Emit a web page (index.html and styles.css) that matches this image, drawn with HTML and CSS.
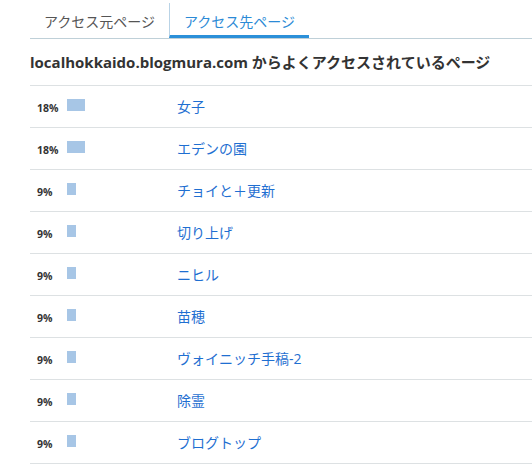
FILE: index.html
```html
<!DOCTYPE html>
<html lang="ja">
<head>
<meta charset="utf-8">
<link rel="stylesheet" href="styles.css">
</head>
<body>
<div class="wrap">
  <div class="tabs">
    <div class="tab">アクセス元ページ</div>
    <div class="tab active">アクセス先ページ</div>
  </div>
  <h2 class="title">localhokkaido.blogmura.com からよくアクセスされているページ</h2>
  <div class="list">
    <div class="row"><div class="rate"><span class="pct">18%</span><span class="bar" style="width:18px"></span></div><a class="link">女子</a></div>
    <div class="row"><div class="rate"><span class="pct">18%</span><span class="bar" style="width:18px"></span></div><a class="link">エデンの園</a></div>
    <div class="row"><div class="rate"><span class="pct">9%</span><span class="bar" style="width:9px"></span></div><a class="link">チョイと＋更新</a></div>
    <div class="row"><div class="rate"><span class="pct">9%</span><span class="bar" style="width:9px"></span></div><a class="link">切り上げ</a></div>
    <div class="row"><div class="rate"><span class="pct">9%</span><span class="bar" style="width:9px"></span></div><a class="link">ニヒル</a></div>
    <div class="row"><div class="rate"><span class="pct">9%</span><span class="bar" style="width:9px"></span></div><a class="link">苗穂</a></div>
    <div class="row"><div class="rate"><span class="pct">9%</span><span class="bar" style="width:9px"></span></div><a class="link">ヴォイニッチ手稿-2</a></div>
    <div class="row"><div class="rate"><span class="pct">9%</span><span class="bar" style="width:9px"></span></div><a class="link">除霊</a></div>
    <div class="row"><div class="rate"><span class="pct">9%</span><span class="bar" style="width:9px"></span></div><a class="link">ブログトップ</a></div>
  </div>
</div>
</body>
</html>
```
FILE: styles.css
```css
html, body {
  margin: 0;
  padding: 0;
  background: #fff;
}
body {
  font-family: "Open Sans", "Noto Sans CJK JP", sans-serif;
  color: #333;
}
.wrap {
  padding-left: 30px;
  padding-top: 3px;
}
.tabs {
  display: flex;
  border-bottom: 1px solid #bfd0d8;
  height: 35px;
}
.tab {
  width: 139px;
  display: flex;
  align-items: center;
  justify-content: center;
  font-size: 14px;
  color: #555;
}
.tab.active {
  width: 140px;
  box-sizing: border-box;
  border-left: 1px solid #b9d3e6;
  border-bottom: 3px solid #2b90d9;
  color: #2b8ad6;
  padding-top: 3px;
}
.title {
  margin: 0;
  font-size: 15px;
  font-weight: bold;
  color: #333;
  height: 46px;
  line-height: 46px;
}
.row {
  display: flex;
  align-items: center;
  height: 41px;
  border-top: 1px solid #dde1e3;
}
.row:last-child {
  border-bottom: 1px solid #dde1e3;
}
.rate {
  width: 140px;
  padding-left: 7px;
  box-sizing: border-box;
  display: flex;
  align-items: center;
}
.pct {
  width: 30px;
  font-size: 10.5px;
  font-weight: bold;
  color: #333;
  padding-top: 3px;
}
.bar {
  display: block;
  height: 12px;
  background: #a7c6e6;
  margin-top: -3px;
}
.link {
  padding-left: 7px;
  margin-top: -2px;
  font-size: 14px;
  color: #1f6fd1;
  text-decoration: none;
}
```
